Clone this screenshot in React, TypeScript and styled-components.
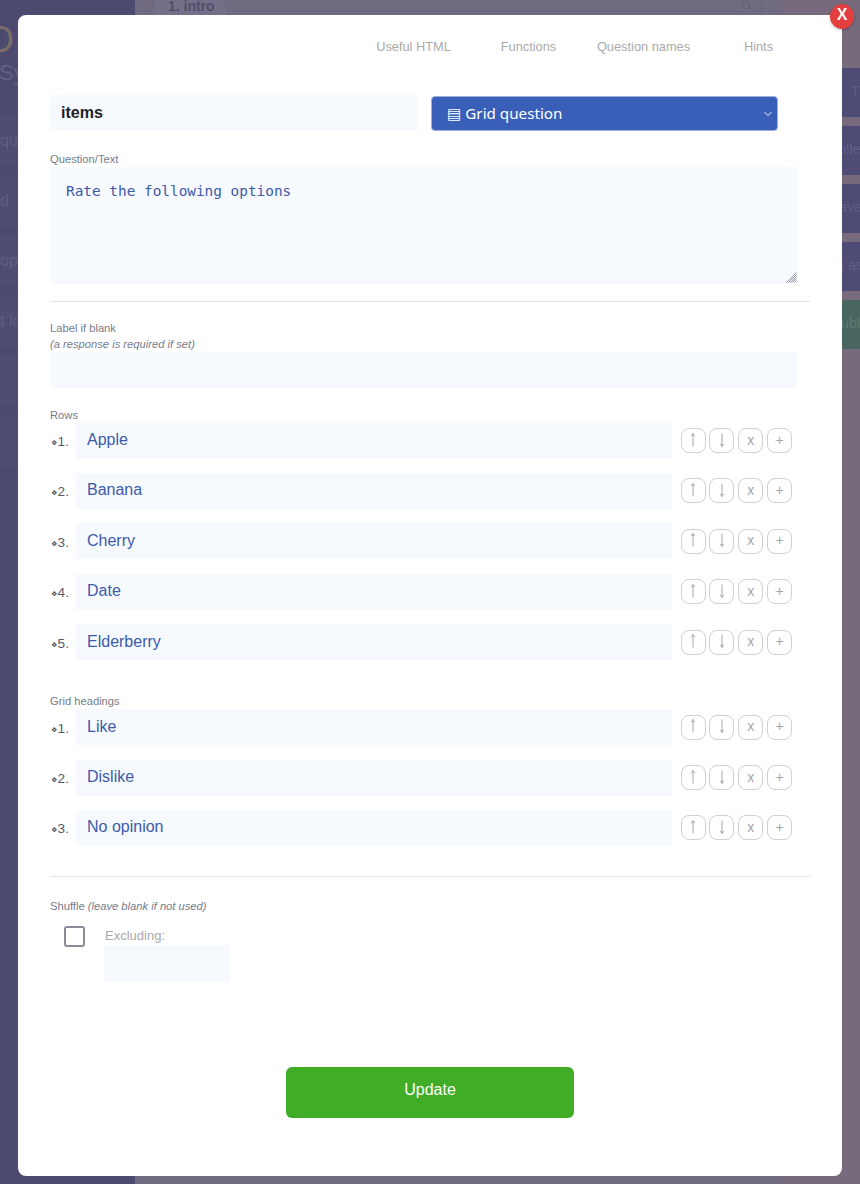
import React from 'react';
import styled, { createGlobalStyle } from 'styled-components';
import { Search, EllipsisVertical, ChevronDown } from 'lucide-react';

const GlobalStyle = createGlobalStyle`
  html, body {
    margin: 0;
    padding: 0;
    height: 100%;
    overflow: hidden;
    font-family: "Liberation Sans", Arial, sans-serif;
  }
  * { box-sizing: border-box; }
`;

const Page = styled.div`
  display: flex;
  width: 860px;
  height: 1184px;
  background: #716b82;
  overflow: hidden;
`;

const Sidebar = styled.aside`
  width: 135px;
  background: #4c4a6e;
  display: flex;
  flex-direction: column;
`;

const Logo = styled.div`
  height: 58px;
  padding-top: 20px;
  margin-left: -14px;
  color: #7a6c66;
  font-size: 36px;
  line-height: 40px;
`;

const Tagline = styled.div`
  height: 58px;
  margin-left: -1px;
  color: #636188;
  font-size: 22px;
  line-height: 30px;
`;

const SideItem = styled.div`
  height: 50px;
  margin-bottom: 10px;
  background: #4f4d72;
  color: #605e84;
  font-size: 16px;
  line-height: 50px;
  white-space: nowrap;
`;

const Main = styled.main`
  flex: 1;
`;

const TopBar = styled.div`
  display: flex;
  align-items: flex-start;
  justify-content: space-between;
  height: 15px;
  padding-left: 20px;
  padding-right: 16px;
  color: #504e66;
  overflow: hidden;
`;

const Chip = styled.div`
  width: 70px;
  height: 15px;
  padding-left: 13px;
  background: #75708a;
  font-size: 14px;
  font-weight: 700;
  line-height: 12px;
`;

const TopIcons = styled.div`
  display: flex;
  gap: 4px;
  color: #615d75;
`;

const RightColumn = styled.aside`
  width: 77px;
  padding-top: 68px;
  background: #766a7c;
  display: flex;
  flex-direction: column;
  gap: 9px;
`;

const RightItem = styled.div<{ $green?: boolean; $inset: number }>`
  height: 49px;
  padding-left: ${(p) => p.$inset}px;
  background: ${(p) => (p.$green ? '#48665f' : '#4e4b74')};
  color: ${(p) => (p.$green ? '#5e7a74' : '#605e86')};
  font-size: 14.4px;
  line-height: 47px;
  white-space: nowrap;
  overflow: hidden;
`;

const Modal = styled.div`
  position: fixed;
  top: 15px;
  left: 18px;
  width: 824px;
  height: 1161px;
  padding: 25px 32px 0;
  background: #fff;
  border-radius: 8px;
`;

const CloseButton = styled.button`
  position: absolute;
  top: -11px;
  right: -12px;
  width: 24px;
  height: 25px;
  padding: 0 0 3px;
  border: 0;
  border-radius: 50%;
  background: #e53e3e;
  color: #fff;
  font-family: "Liberation Sans", Arial, sans-serif;
  font-size: 16px;
  font-weight: 700;
  line-height: 20px;
  box-shadow: 0 1px 3px rgba(0, 0, 0, 0.25);
`;

const Tabs = styled.nav`
  display: grid;
  grid-template-columns: repeat(4, 115px);
  justify-content: end;
  margin-right: -6px;
`;

const Tab = styled.span`
  color: #aaaaaa;
  font-size: 12.8px;
  line-height: 14px;
  text-align: center;
`;

const HeadRow = styled.div`
  display: flex;
  align-items: flex-start;
  gap: 14px;
  margin-top: 41px;
`;

const TextField = styled.input<{ $width: number; $strong?: boolean }>`
  display: block;
  flex: none;
  width: ${(p) => p.$width}px;
  height: 36px;
  padding: 0 11px ${(p) => (p.$strong ? 0 : 1)}px;
  border: 0;
  border-radius: 0;
  outline: 0;
  background: #f6f9fe;
  color: ${(p) => (p.$strong ? '#1f2126' : '#3d5ba9')};
  font-family: "Liberation Sans", Arial, sans-serif;
  font-size: 16px;
  font-weight: ${(p) => (p.$strong ? 700 : 400)};
`;

const SelectWrap = styled.div`
  position: relative;
  width: 347px;
  height: 35px;
  margin-top: 1px;
  color: #fff;

  svg {
    position: absolute;
    top: 12px;
    right: 4px;
    pointer-events: none;
  }
`;

const TypeSelect = styled.select`
  display: block;
  width: 100%;
  height: 100%;
  padding: 0 11px 1px 15px;
  border: 1px solid #9fb0d8;
  border-radius: 4px;
  outline: 0;
  appearance: none;
  background-color: #3a5fb8;
  color: #fff;
  font-family: "Noto Sans", "DejaVu Sans", sans-serif;
  font-size: 15.2px;
`;

const FieldLabel = styled.label<{ $top: number }>`
  display: block;
  margin-top: ${(p) => p.$top}px;
  color: #767c8c;
  font-size: 11.2px;
  line-height: 15px;

  em {
    display: block;
    margin-top: 1px;
  }
`;

const QuestionBox = styled.div`
  position: relative;
  width: 748px;
  height: 117px;

  svg {
    position: absolute;
    right: 1px;
    bottom: 1px;
    pointer-events: none;
  }
`;

const QuestionText = styled.textarea`
  display: block;
  width: 100%;
  height: 100%;
  padding: 15px 16px;
  border: 0;
  outline: 0;
  resize: none;
  background: #f6f9fe;
  color: #3d5ba9;
  font-family: "DejaVu Sans Mono", monospace;
  font-size: 14.4px;
  line-height: 18px;
`;

const Divider = styled.hr<{ $top: number }>`
  height: 1px;
  margin: ${(p) => p.$top}px 0 0;
  border: 0;
  background: #e4e4e8;
`;

const OptionList = styled.div`
  display: grid;
  row-gap: 14.4px;
`;

const OptionRow = styled.div`
  display: flex;
  align-items: center;
`;

const OptionNumber = styled.span`
  flex: none;
  width: 26px;
  padding-left: 1px;
  padding-top: 2px;
  color: #565b6a;
  font-size: 13.6px;
  white-space: nowrap;

  b {
    font-family: "DejaVu Sans", sans-serif;
    font-size: 10.5px;
  }
`;

const OptionButtons = styled.div`
  display: flex;
  gap: 3.8px;
  margin-left: 8.6px;
`;

const OptionButton = styled.button`
  display: flex;
  align-items: center;
  justify-content: center;
  width: 25px;
  height: 25px;
  padding: 0 0 2px;
  border: 1px solid #cfd0d4;
  border-radius: 8px;
  background: #fff;
  color: #a4a6ae;
  font-family: "Liberation Sans", Arial, sans-serif;
  font-size: 14px;
  line-height: 20px;
`;

const ShuffleRow = styled.div`
  display: flex;
  align-items: flex-start;
  margin-top: 12px;
  padding-left: 14px;
`;

const CheckBox = styled.span`
  flex: none;
  width: 21px;
  height: 21px;
  margin-right: 19px;
  border: 2px solid #8b8b98;
  border-radius: 3px;
  background: #fff;
`;

const Excluding = styled.label`
  display: block;
  color: #a9a9ad;
  font-size: 13px;
  line-height: 19px;

  span {
    padding-left: 1px;
  }
`;

const UpdateButton = styled.button`
  display: block;
  width: 288px;
  height: 51px;
  margin: 86px auto 0;
  padding: 0 0 4px;
  border: 0;
  border-radius: 6px;
  background: #41ad27;
  color: #fff;
  font-family: "Liberation Sans", Arial, sans-serif;
  font-size: 16px;
`;

const rows = ['Apple', 'Banana', 'Cherry', 'Date', 'Elderberry'];
const headings = ['Like', 'Dislike', 'No opinion'];
const tabs = ['Useful HTML', 'Functions', 'Question names', 'Hints'];
const sideItems = ['qu', 'd', 'ope', 't lo', '', ''];
const rightItems = [
  { label: 'T', inset: 68 },
  { label: 'olle', inset: 55 },
  { label: 'ave', inset: 56 },
  { label: 't as', inset: 57 },
  { label: 'ubl', inset: 58, green: true },
];

const ArrowIcon: React.FC<{ down?: boolean }> = ({ down }) => (
  <svg width="10" height="14" viewBox="0 0 10 14" fill="none" stroke="currentColor" strokeWidth="1">
    <path d={down ? 'M5 0.5V13.5M3.2 10.8L5 13.5L6.8 10.8' : 'M5 13.5V0.5M3.2 3.2L5 0.5L6.8 3.2'} />
  </svg>
);

const ResizeGrip: React.FC = () => (
  <svg width="11" height="11" viewBox="0 0 11 11" fill="none" stroke="#7a7e8a" strokeWidth="0.8">
    <path d="M0.5 10.5L10.5 0.5M2.5 10.5L10.5 2.5M4.5 10.5L10.5 4.5M6.5 10.5L10.5 6.5M8.5 10.5L10.5 8.5" />
  </svg>
);

const Options: React.FC<{ items: string[] }> = ({ items }) => (
  <OptionList>
    {items.map((item, i) => (
      <OptionRow key={item}>
        <OptionNumber>
          <b>⋄</b>
          {i + 1}.
        </OptionNumber>
        <TextField $width={596} defaultValue={item} />
        <OptionButtons>
          <OptionButton aria-label="Move up"><ArrowIcon /></OptionButton>
          <OptionButton aria-label="Move down"><ArrowIcon down /></OptionButton>
          <OptionButton>x</OptionButton>
          <OptionButton>+</OptionButton>
        </OptionButtons>
      </OptionRow>
    ))}
  </OptionList>
);

const App: React.FC = () => (
  <>
    <GlobalStyle />
    <Page>
      <Sidebar>
        <Logo>O</Logo>
        <Tagline>Sy</Tagline>
        {sideItems.map((item, i) => (
          <SideItem key={i}>{item}</SideItem>
        ))}
      </Sidebar>
      <Main>
        <TopBar>
          <Chip>1. intro</Chip>
          <TopIcons>
            <Search size={11} />
            <EllipsisVertical size={11} />
          </TopIcons>
        </TopBar>
      </Main>
      <RightColumn>
        {rightItems.map((item) => (
          <RightItem key={item.label} $inset={item.inset} $green={item.green}>
            {item.label}
          </RightItem>
        ))}
      </RightColumn>
    </Page>

    <Modal>
      <CloseButton>X</CloseButton>
      <Tabs>
        {tabs.map((tab) => (
          <Tab key={tab}>{tab}</Tab>
        ))}
      </Tabs>

      <HeadRow>
        <TextField $width={367} $strong defaultValue="items" />
        <SelectWrap>
          <TypeSelect defaultValue="grid">
            <option value="grid">▤ Grid question</option>
          </TypeSelect>
          <ChevronDown size={12} strokeWidth={2} />
        </SelectWrap>
      </HeadRow>

      <FieldLabel $top={21}>Question/Text</FieldLabel>
      <QuestionBox>
        <QuestionText defaultValue="Rate the following options" />
        <ResizeGrip />
      </QuestionBox>
      <Divider $top={17} />

      <FieldLabel $top={19}>
        Label if blank
        <em>(a response is required if set)</em>
      </FieldLabel>
      <TextField $width={747} />

      <FieldLabel $top={19.6}>Rows</FieldLabel>
      <Options items={rows} />

      <FieldLabel $top={34}>Grid headings</FieldLabel>
      <Options items={headings} />
      <Divider $top={30} />

      <FieldLabel $top={22}>
        Shuffle <i>(leave blank if not used)</i>
      </FieldLabel>
      <ShuffleRow>
        <CheckBox />
        <Excluding>
          <span>Excluding:</span>
          <TextField $width={126} />
        </Excluding>
      </ShuffleRow>

      <UpdateButton>Update</UpdateButton>
    </Modal>
  </>
);

export default App;
